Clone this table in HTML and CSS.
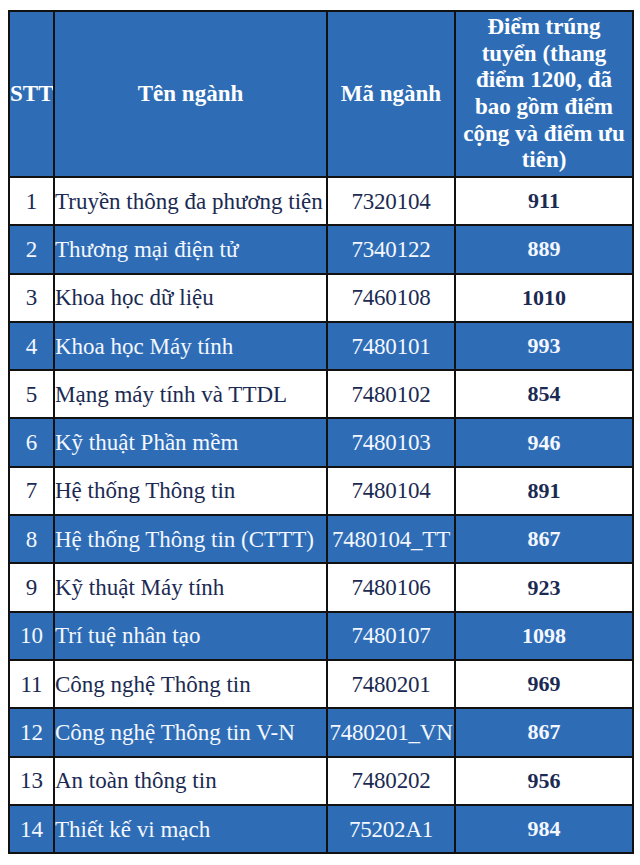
FILE: index.html
```html
<!DOCTYPE html>
<html lang="vi">
<head>
<meta charset="utf-8">
<title>Điểm trúng tuyển</title>
<link rel="stylesheet" href="styles.css">
</head>
<body>
<div class="wrap">
<table class="scores">
  <colgroup>
    <col class="c-stt">
    <col class="c-name">
    <col class="c-code">
    <col class="c-score">
  </colgroup>
  <thead>
    <tr class="head">
      <th>STT</th>
      <th>Tên ngành</th>
      <th>Mã ngành</th>
      <th>Điểm trúng<br>tuyển (thang<br>điểm 1200, đã<br>bao gồm điểm<br>cộng và điểm ưu<br>tiên)</th>
    </tr>
  </thead>
  <tbody>
    <tr class="light"><td class="stt">1</td><td class="name">Truyền thông đa phương tiện</td><td class="code">7320104</td><td class="score">911</td></tr>
    <tr class="blue"><td class="stt">2</td><td class="name">Thương mại điện tử</td><td class="code">7340122</td><td class="score">889</td></tr>
    <tr class="light"><td class="stt">3</td><td class="name">Khoa học dữ liệu</td><td class="code">7460108</td><td class="score">1010</td></tr>
    <tr class="blue"><td class="stt">4</td><td class="name">Khoa học Máy tính</td><td class="code">7480101</td><td class="score">993</td></tr>
    <tr class="light"><td class="stt">5</td><td class="name">Mạng máy tính và TTDL</td><td class="code">7480102</td><td class="score">854</td></tr>
    <tr class="blue"><td class="stt">6</td><td class="name">Kỹ thuật Phần mềm</td><td class="code">7480103</td><td class="score">946</td></tr>
    <tr class="light"><td class="stt">7</td><td class="name">Hệ thống Thông tin</td><td class="code">7480104</td><td class="score">891</td></tr>
    <tr class="blue"><td class="stt">8</td><td class="name">Hệ thống Thông tin (CTTT)</td><td class="code">7480104_TT</td><td class="score">867</td></tr>
    <tr class="light"><td class="stt">9</td><td class="name">Kỹ thuật Máy tính</td><td class="code">7480106</td><td class="score">923</td></tr>
    <tr class="blue"><td class="stt">10</td><td class="name">Trí tuệ nhân tạo</td><td class="code">7480107</td><td class="score">1098</td></tr>
    <tr class="light"><td class="stt">11</td><td class="name">Công nghệ Thông tin</td><td class="code">7480201</td><td class="score">969</td></tr>
    <tr class="blue"><td class="stt">12</td><td class="name">Công nghệ Thông tin V-N</td><td class="code">7480201_VN</td><td class="score">867</td></tr>
    <tr class="light"><td class="stt">13</td><td class="name">An toàn thông tin</td><td class="code">7480202</td><td class="score">956</td></tr>
    <tr class="blue"><td class="stt">14</td><td class="name">Thiết kế vi mạch</td><td class="code">75202A1</td><td class="score">984</td></tr>
  </tbody>
</table>
</div>
</body>
</html>
```
FILE: styles.css
```css
html, body {
  margin: 0;
  padding: 0;
  background: #ffffff;
}

.wrap {
  padding: 10px 0 0 8px;
}

.scores {
  border-collapse: collapse;
  table-layout: fixed;
  width: 624px;
  font-family: "Liberation Serif", "Times New Roman", serif;
  font-size: 23px;
  color: #1b2a52;
}

.c-stt { width: 45px; }
.c-name { width: 273px; }
.c-code { width: 128px; }
.c-score { width: 178px; }

.scores th,
.scores td {
  border: 2px solid #111111;
  padding: 0;
  vertical-align: middle;
  white-space: nowrap;
  overflow: hidden;
}

.head {
  height: 166px;
  background: #2e6db6;
}

.head th {
  color: #ffffff;
  font-weight: bold;
  font-size: 23px;
  line-height: 26.7px;
  text-align: center;
}

tbody tr {
  height: 48.3px;
  line-height: 1;
}

.light {
  background: #ffffff;
  color: #1b2a52;
}

.blue {
  background: #2e6db6;
  color: #f4f7ff;
}

.stt {
  text-align: center;
}

.name {
  text-align: left;
  padding-left: 1px;
}

.code {
  text-align: center;
  letter-spacing: -0.2px;
}

.score {
  text-align: center;
  font-weight: bold;
  font-size: 22px;
}
```
